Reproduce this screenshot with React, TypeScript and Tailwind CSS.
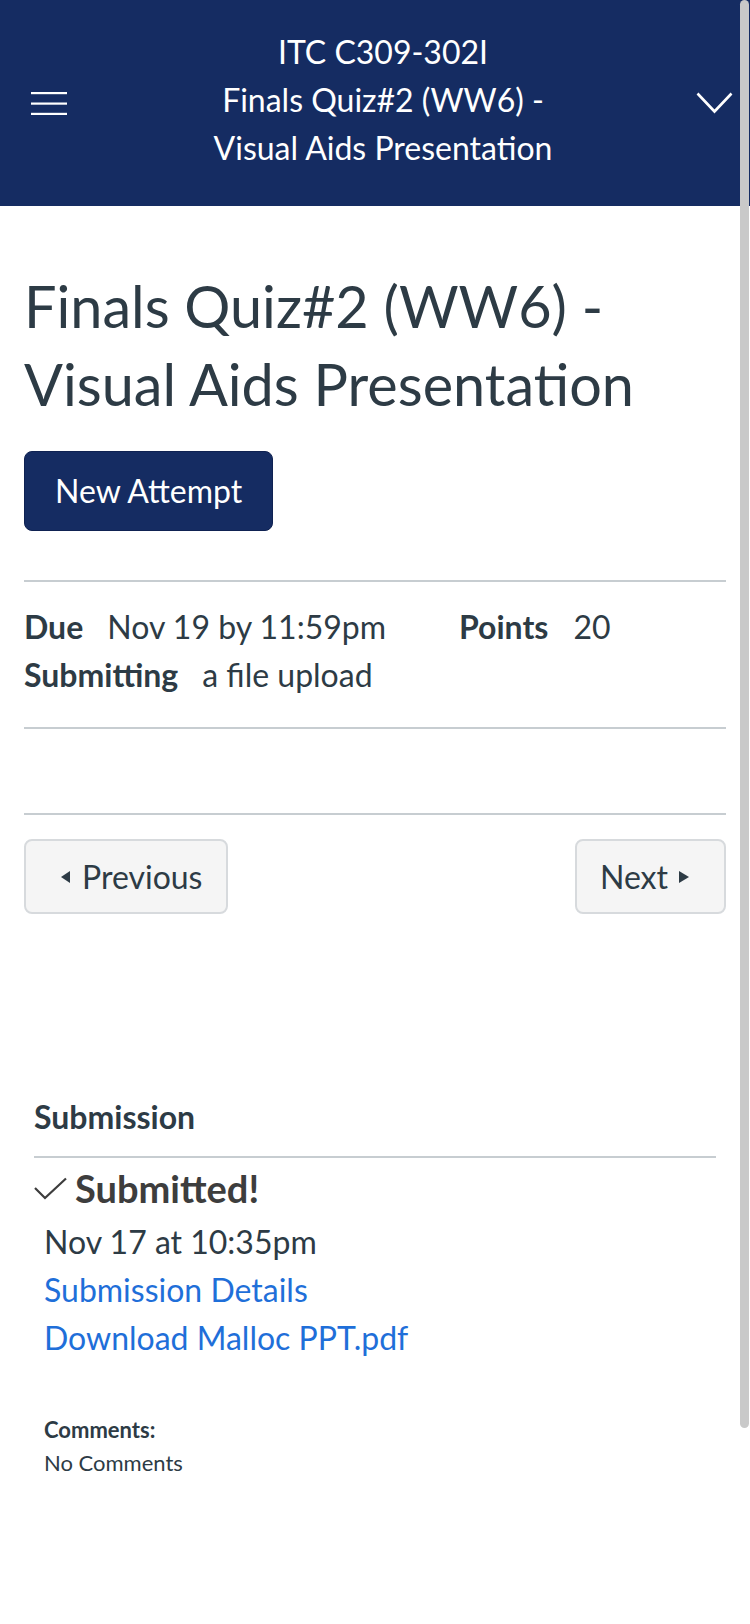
import React from "react";

const font = { fontFamily: "Lato, 'Noto Sans', sans-serif" };

function Hamburger() {
  return (
    <svg width="36" height="23" viewBox="0 0 36 23" className="block">
      <rect x="0" y="0" width="36" height="2.2" fill="#fff" />
      <rect x="0" y="10.5" width="36" height="2.2" fill="#fff" />
      <rect x="0" y="20.8" width="36" height="2.2" fill="#fff" />
    </svg>
  );
}

function Chevron() {
  return (
    <svg width="37" height="22" viewBox="0 0 37 22" className="block">
      <polyline points="1.5,1.5 18.5,19.5 35.5,1.5" fill="none" stroke="#fff" strokeWidth="2.6" />
    </svg>
  );
}

function Check() {
  return (
    <svg width="33" height="23" viewBox="0 0 33 23" className="block">
      <polyline points="1,11 11,21 32,1.5" fill="none" stroke="#3d3d3d" strokeWidth="2.2" />
    </svg>
  );
}

function Header() {
  return (
    <header className="grid h-[206px] grid-cols-[100px_1fr_84px] items-center bg-[#152c62] text-white">
      <div className="pl-[31px]">
        <Hamburger />
      </div>
      <div className="pb-[6px] text-center text-[32px] leading-[48px]">
        <div>ITC C309-302I</div>
        <div>Finals Quiz#2 (WW6) -</div>
        <div>Visual Aids Presentation</div>
      </div>
      <div className="pl-[30px]">
        <Chevron />
      </div>
    </header>
  );
}

function Details() {
  return (
    <div className="border-y-2 border-[#c7cdd1] pt-[21px] pb-[28px] text-[32px] leading-[48px]">
      <div className="flex">
        <div className="w-[435px]">
          <span className="font-bold">Due</span>
          <span className="ml-[24px]">Nov 19 by 11:59pm</span>
        </div>
        <div>
          <span className="font-bold">Points</span>
          <span className="ml-[25px]">20</span>
        </div>
      </div>
      <div>
        <span className="font-bold">Submitting</span>
        <span className="ml-[24px]">a file upload</span>
      </div>
    </div>
  );
}

function Pager() {
  return (
    <div className="mt-[84px] border-t-2 border-[#c7cdd1] pt-[24px]">
      <div className="flex justify-between">
        <button className="flex h-[75px] w-[204px] items-center gap-[12px] rounded-[8px] border-2 border-[#d7dadd] bg-[#f5f5f5] pl-[35px] text-[32px] text-[#2d3b45]">
          <svg width="9" height="12" viewBox="0 0 9 12">
            <polygon points="9,0 9,12 0,6" fill="#2d3b45" />
          </svg>
          Previous
        </button>
        <button className="flex h-[75px] w-[151px] items-center gap-[11px] rounded-[8px] border-2 border-[#d7dadd] bg-[#f5f5f5] pl-[23px] text-[32px] text-[#2d3b45]">
          Next
          <svg width="10" height="12" viewBox="0 0 10 12">
            <polygon points="0,0 0,12 10,6" fill="#2d3b45" />
          </svg>
        </button>
      </div>
    </div>
  );
}

function Submission() {
  return (
    <section className="mt-[185px] pl-[10px] pr-[10px] text-[#2d3b45]">
      <h2 className="pb-[21px] text-[32px] leading-[36px] font-bold">Submission</h2>
      <div className="h-[2px] bg-[#c7cdd1]" />
      <div className="mt-[8px] flex items-center gap-[8px] text-[38px] leading-[44px] font-bold text-[#3d3d3d]">
        <Check />
        <span>Submitted!</span>
      </div>
      <div className="mt-[8px] pl-[10px] text-[32px] leading-[48px]">
        <div>Nov 17 at 10:35pm</div>
        <div className="text-[#1f6fd9]">Submission Details</div>
        <div className="text-[#1f6fd9]">Download Malloc PPT.pdf</div>
      </div>
      <div className="mt-[51px] pl-[10px] text-[22px] leading-[33px]">
        <div className="font-bold">Comments:</div>
        <div>No Comments</div>
      </div>
    </section>
  );
}

export default function App() {
  return (
    <div className="relative min-h-screen bg-white text-[#2d3b45]" style={font}>
      <Header />
      <main className="px-[24px] pb-[120px]">
        <h1 className="mt-[61px] text-[57.6px] leading-[78px]">
          Finals Quiz#2 (WW6) -<br />
          Visual Aids Presentation
        </h1>
        <button className="mt-[28px] h-[80px] rounded-[8px] border border-[#0f2252] bg-[#152c62] px-[30px] text-[32px] text-white">
          New Attempt
        </button>
        <div className="mt-[49px]">
          <Details />
        </div>
        <Pager />
        <Submission />
      </main>
      <div className="absolute top-0 right-[1px] h-[1428px] w-[9px] rounded-full bg-[#c9c9c9]" />
    </div>
  );
}
